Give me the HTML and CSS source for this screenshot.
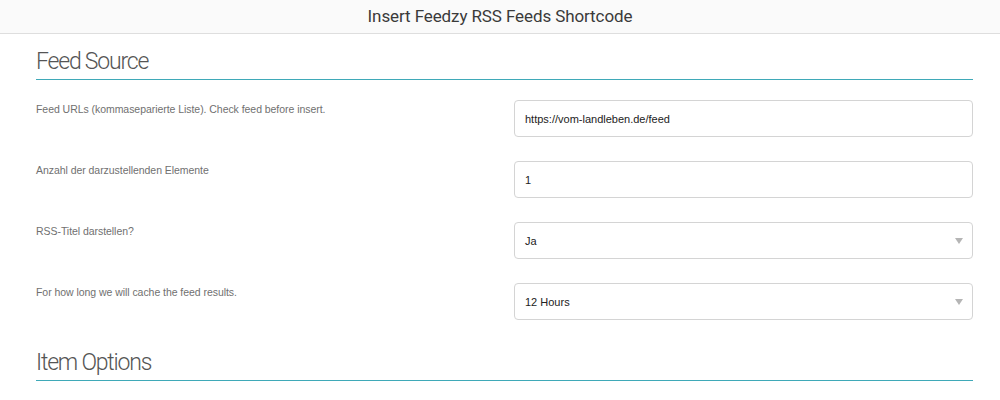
FILE: index.html
```html
<!DOCTYPE html>
<html lang="de">
<head>
<meta charset="utf-8">
<title>Insert Feedzy RSS Feeds Shortcode</title>
<link rel="stylesheet" href="styles.css">
</head>
<body>
<header class="topbar">Insert Feedzy RSS Feeds Shortcode</header>
<main class="content">
  <h2 class="section-title">Feed Source</h2>
  <div class="form">
    <div class="row">
      <label class="label">Feed URLs (kommaseparierte Liste). Check feed before insert.</label>
      <div class="field">https://vom-landleben.de/feed</div>
    </div>
    <div class="row">
      <label class="label">Anzahl der darzustellenden Elemente</label>
      <div class="field">1</div>
    </div>
    <div class="row">
      <label class="label">RSS-Titel darstellen?</label>
      <div class="field select">Ja<span class="arrow"></span></div>
    </div>
    <div class="row">
      <label class="label">For how long we will cache the feed results.</label>
      <div class="field select">12 Hours<span class="arrow"></span></div>
    </div>
  </div>
  <h2 class="section-title second">Item Options</h2>
</main>
</body>
</html>
```
FILE: styles.css
```css
* { box-sizing: border-box; }
html, body { margin: 0; padding: 0; background: #fff; }
body { font-family: "Liberation Sans", Arial, sans-serif; }

.topbar {
  height: 34px;
  background: #fafafa;
  border-bottom: 1px solid #dedede;
  text-align: center;
  font-family: Roboto, "Liberation Sans", sans-serif;
  font-size: 17px;
  line-height: 33px;
  letter-spacing: -0.1px;
  color: #3a3a3a;
}

.content {
  padding: 0 27px 0 36px;
}

.section-title {
  margin: 0;
  padding-top: 14px;
  height: 46px;
  border-bottom: 1px solid #3fa9b8;
  font-family: Roboto, "Liberation Sans", sans-serif;
  font-weight: 300;
  font-size: 23px;
  line-height: 28px;
  letter-spacing: -1.2px;
  color: #555;
}

.section-title.second {
  margin-top: 15px;
}

.form {
  display: flex;
  flex-direction: column;
  gap: 24px;
  padding-top: 20px;
}

.row {
  display: grid;
  grid-template-columns: 1fr 459px;
  align-items: start;
}

.label {
  font-size: 10.5px;
  color: #707070;
  padding-top: 3px;
  letter-spacing: -0.05px;
}

.field {
  position: relative;
  height: 37px;
  border: 1px solid #d4d4d4;
  border-radius: 4px;
  padding: 1px 10px 0;
  font-size: 11px;
  line-height: 35px;
  color: #222;
  background: #fff;
}

.arrow {
  position: absolute;
  right: 9px;
  top: 15px;
  width: 0;
  height: 0;
  border-left: 4px solid transparent;
  border-right: 4px solid transparent;
  border-top: 6px solid #b5b5b5;
}
```
